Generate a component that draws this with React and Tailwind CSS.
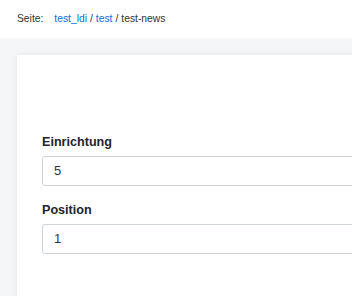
import React from 'react'

const Field = ({ label, value, className = '' }) => (
    <div className={className}>
        <label className="block text-[12.6px] leading-[20px] font-bold text-[#212529] mb-[4px]">
            {label}
        </label>
        <div className="h-[30px] w-[400px] flex items-center px-[11px] border border-[#ced4da] rounded-[3px] bg-white text-[13px] text-[#333]">
            {value}
        </div>
    </div>
)

export default function App() {
    return (
        <div
            className="h-[296px] w-[352px] overflow-hidden bg-[#f5f6f7]"
            style={{ fontFamily: '"Liberation Sans", Arial, sans-serif' }}
        >
            {/* Breadcrumb */}
            <div className="h-[38px] bg-white flex items-center px-[17px] text-[10.3px] text-[#333]">
                <span className="mr-[11px]">Seite:</span>
                <a className="text-[#0a6fdb]">test_ldi</a>
                <span className="mx-[3px]">/</span>
                <a className="text-[#0a6fdb]">test</a>
                <span className="mx-[3px]">/</span>
                <span>test-news</span>
            </div>

            {/* Card */}
            <div className="pl-[17px] pt-[17px]">
                <div className="bg-white w-[500px] h-[300px] shadow-[0_0_6px_rgba(0,0,0,0.08)] pl-[25px] pt-[77px]">
                    <Field label="Einrichtung" value="5" />
                    <Field label="Position" value="1" className="mt-[14px]" />
                </div>
            </div>
        </div>
    )
}
